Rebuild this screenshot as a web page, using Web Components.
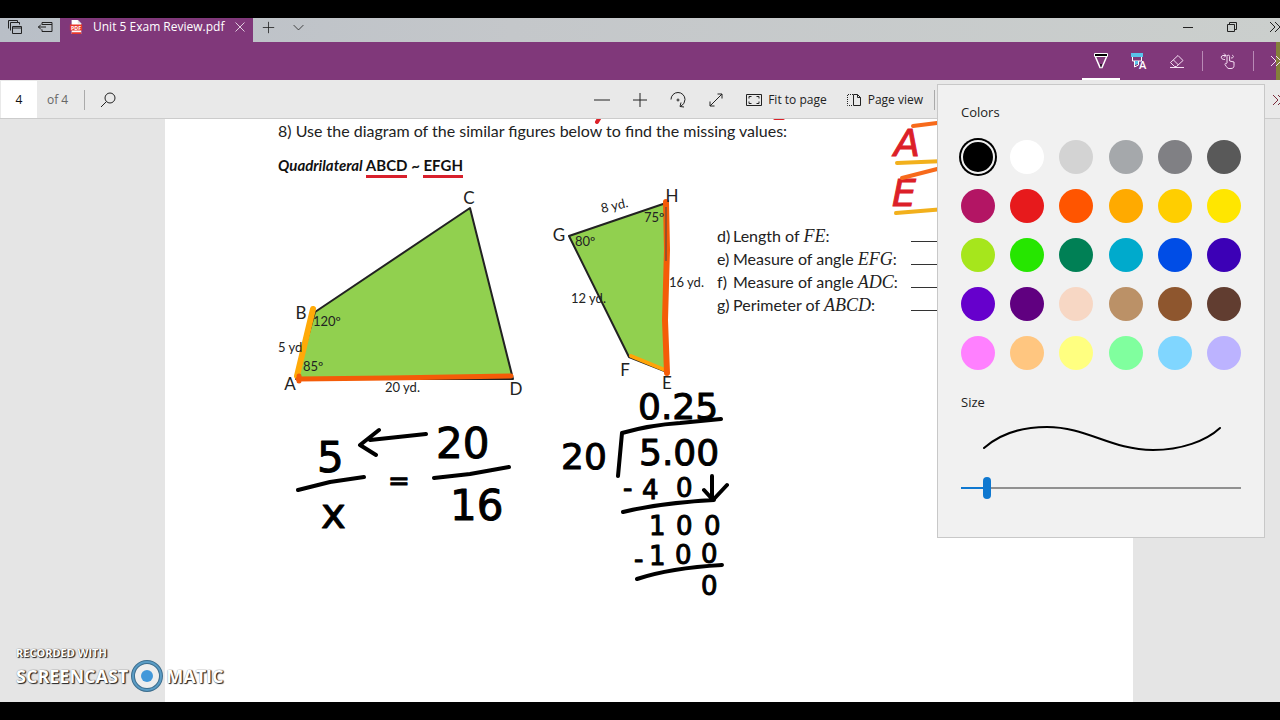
<!DOCTYPE html>
<html lang="en">
<head>
<meta charset="utf-8">
<title>Unit 5 Exam Review.pdf</title>
<style>
  body {
    margin: 0;
    background: #000;
    font-family: 'Open Sans', 'Noto Sans', sans-serif;
    font-size: 12px;
    color: #222;
  }
</style>
</head>
<body>
<reader-window></reader-window>

<script>
// === Helper ====================================================
// Registers an element whose shadow root is cloned from a template.

function component(name, html, setup) {
  const template = document.createElement('template');
  template.innerHTML = html;

  customElements.define(name, class extends HTMLElement {
    constructor() {
      super();
      this.attachShadow({ mode: 'open' });
      this.shadowRoot.appendChild(template.content.cloneNode(true));
    }
    connectedCallback() {
      if (setup) setup(this, this.shadowRoot);
    }
  });
}

// === ui-icon ===================================================
// <ui-icon name="plus"></ui-icon>, drawn with currentColor.

const ICONS = {
  tabs: '<path d="M1.500 9.500v-8h9v2M3.500 11.500v-8h9v2M5.500 7.500h9v7h-9zM5.500 9h9"/>',
  aside: '<path d="M5 5.500v-2h10v9H5v-2M5 5.500h10M1 8h8M4 5.500L1.500 8 4 10.500"/>',
  close: '<path d="M2 2l12 12M14 2L2 14"/>',
  plus: '<path d="M8 1v14M1 8h14"/>',
  minus: '<path d="M0 8h16"/>',
  down: '<path d="M2 5l6 6 6-6"/>',
  minimize: '<path d="M3 8.500h10"/>',
  restore: '<path d="M3.500 5.500h7v7h-7zM5.500 5.500v-2h7v7h-2"/>',
  more: '<path d="M3 3l5 5-5 5M8 3l5 5-5 5"/>',
  search: '<circle cx="10" cy="6" r="5"/><path d="M6.500 9.500L1 15"/>',
  rotate: '<path d="M1 7.500A7 7 0 0 1 15 7.500Q15 12 10.500 14.500M14 15l-4-.5 1-4"/><circle cx="8" cy="8" r="1"/>',
  expand: '<path d="M2 14L14 2M9.500 2H14v4.500M2 9.500V14h4.500"/>',
  fit: '<path d="M.5 2.500h15v11H.5zM3 6.500v-2h2.500M10.500 4.500H13v2M13 9.500v2h-2.500M5.500 11.500H3v-2"/>',
  pages: '<path stroke-dasharray="1 1" d="M7 2.500H1.500v11H7"/><path d="M7.500 2.500h4l3 3v8h-7zM11.500 2.500v3h3"/>',
  pen: '<path fill="#000" stroke="#fff" d="M1.500.5h13v3h-13z"/><path stroke="#fff" stroke-width="1.500" d="M2.500 4l4.500 10.500h2L13.500 4"/><path fill="#111" stroke="none" d="M7 11h2l-1 4z"/>',
  marker: '<path fill="#59c3ea" stroke="none" d="M0 0h12v4H0z"/><path stroke="#fff" d="M1.500 4v4h9V4M3.500 8v6l4-2V8"/><path fill="#59c3ea" stroke="none" d="M4 8h3v3l-3 1z"/><text x="8" y="16" fill="#fff" stroke="none" font-size="11" font-weight="600">A</text>',
  eraser: '<path d="M1.500 9.500l7.500-7 5 5-6.500 6h-2zM4.500 7l5 5M1 14.500h14"/>',
  touch: '<path d="M7 10V3.500a1.300 1.300 0 0 1 2.600 0V8l4.400 1v3.500c0 2-1 3-3 3H9c-1.500 0-2-1-4-4 0-1.500 1-1.500 2-.5M5 6.500C1 7 0 3 3 2.500h3M4 .5l2 2-2 2M11 5c3 0 3-2 1-3"/>',
  pdf: '<path fill="#fff" stroke="none" d="M3 0h7l4 4v12H3z"/><path fill="#ddd" stroke="none" d="M10 0v4h4z"/><path fill="#e8372c" stroke="none" d="M1 5h14v7H1zM3 14h11v2H3z"/><text x="8" y="11" text-anchor="middle" fill="#fff" stroke="none" font-size="6" font-weight="700">PDF</text>'
};

component('ui-icon', `
<style>
  :host { display: inline-flex; width: 16px; height: 16px; flex: none; }
  svg { width: 100%; height: 100%; overflow: visible; fill: none; stroke: currentColor; }
</style>
<svg viewBox="0 0 16 16" aria-hidden="true"></svg>
`, (host, root) => {
  root.querySelector('svg').innerHTML = ICONS[host.getAttribute('name')];
});

// === tool-button ===============================================
// A flat button. Attributes: label, selected.

component('tool-button', `
<style>
  :host { display: flex; min-width: 38px; flex: none; }
  button {
    display: flex; flex: 1; align-items: center; justify-content: center; gap: 6px;
    padding: 0; border: 0; border-bottom: 2px solid transparent; border-top: 2px solid transparent;
    background: none; color: inherit; font: inherit; white-space: nowrap;
  }
  :host([selected]) button { border-bottom-color: #fff; }
</style>
<button type="button"><slot></slot></button>
`, (host, root) => {
  const label = host.getAttribute('label');
  if (label) root.querySelector('button').setAttribute('aria-label', label);
});

// === tab-strip =================================================

component('tab-strip', `
<style>
  :host {
    display: flex; height: 24px; overflow: hidden; color: #222;
    background: linear-gradient(90deg, #b9bfc7, #c4c7ca 40%, #cbcfcd);
  }
  .start { display: flex; align-items: center; justify-content: space-between; width: 46px; padding: 0 7px; height: 18px; }
  .tab {
    display: flex; align-items: center; gap: 10px; box-sizing: border-box;
    width: 193px; padding: 0 11px 7px 9px; background: #80387a; color: #fff;
  }
  .title { flex: 1; white-space: nowrap; }
  .tab ui-icon { width: 14px; height: 14px; }
  .tab tool-button { min-width: 12px; }
  .tab tool-button ui-icon { width: 12px; height: 12px; }
  .new { display: flex; height: 18px; }
  .new tool-button { min-width: 30px; }
  .new ui-icon { width: 13px; height: 13px; }
  .window { display: flex; height: 18px; margin-left: auto; margin-right: -3px; }
  .window tool-button { min-width: 44px; }
  .window .more { min-width: 28px; }
  .more ui-icon { margin-left: 13px; }
</style>
<div class="start"><ui-icon name="tabs"></ui-icon><ui-icon name="aside"></ui-icon></div>
<div class="tab">
  <ui-icon name="pdf"></ui-icon>
  <span class="title">Unit 5 Exam Review.pdf</span>
  <tool-button label="Close tab"><ui-icon name="close"></ui-icon></tool-button>
</div>
<div class="new">
  <tool-button label="New tab"><ui-icon name="plus"></ui-icon></tool-button>
  <tool-button label="Tab previews"><ui-icon name="down"></ui-icon></tool-button>
</div>
<div class="window">
  <tool-button label="Minimize"><ui-icon name="minimize"></ui-icon></tool-button>
  <tool-button label="Restore"><ui-icon name="restore"></ui-icon></tool-button>
  <tool-button class="more" label="More"><ui-icon name="more"></ui-icon></tool-button>
</div>
`);

// === ink-bar ===================================================
// The purple bar with pen, highlighter, eraser and touch writing.

component('ink-bar', `
<style>
  :host {
    display: flex; justify-content: flex-end; height: 38px; overflow: hidden; color: #f6dff4;
    background: linear-gradient(#84803a, #84803a) right / 4px 100% no-repeat #80387a;
  }
  hr { width: 1px; height: 20px; margin: 9px 6px; border: 0; background: #b98ab6; }
  .more { min-width: 24px; margin-right: -4px; }
  .more ui-icon { margin-left: 8px; }
</style>
<tool-button label="Pen" selected><ui-icon name="pen"></ui-icon></tool-button>
<tool-button label="Highlighter"><ui-icon name="marker"></ui-icon></tool-button>
<tool-button label="Eraser"><ui-icon name="eraser"></ui-icon></tool-button>
<hr>
<tool-button label="Touch writing"><ui-icon name="touch"></ui-icon></tool-button>
<hr>
<tool-button class="more" label="More"><ui-icon name="more"></ui-icon></tool-button>
`);

// === pdf-toolbar ===============================================

component('pdf-toolbar', `
<style>
  :host {
    display: flex; box-sizing: border-box; height: 39px; padding-top: 1px; overflow: hidden;
    background: #e9e9e9; border-bottom: 1px solid #ccc; color: #222;
  }
  label { display: flex; align-items: center; gap: 10px; color: #666; }
  input {
    box-sizing: border-box; width: 36px; height: 37px; margin-left: 1px; padding: 0; border: 0;
    background: #fff; color: #111; font: inherit; text-align: center;
  }
  hr { width: 1px; height: 20px; margin: 9px 0; border: 0; background: #aaa; }
  .left { display: flex; }
  .left hr { margin-left: 16px; margin-right: 4px; }
  .right { display: flex; margin-left: auto; margin-right: -6px; }
  .text { padding: 0 11px; }
  .text + .text { padding-left: 8px; }
  .covered { width: 319px; }
  .more { min-width: 32px; color: #7a2a3a; }
  .more ui-icon { margin-left: 16px; }
</style>
<div class="left">
  <label><input type="text" value="4" aria-label="Page">of 4</label>
  <hr>
  <tool-button label="Search"><ui-icon name="search"></ui-icon></tool-button>
</div>
<div class="right">
  <tool-button label="Zoom out"><ui-icon name="minus"></ui-icon></tool-button>
  <tool-button label="Zoom in"><ui-icon name="plus"></ui-icon></tool-button>
  <tool-button label="Rotate"><ui-icon name="rotate"></ui-icon></tool-button>
  <tool-button label="Full screen"><ui-icon name="expand"></ui-icon></tool-button>
  <tool-button class="text"><ui-icon name="fit"></ui-icon>Fit to page</tool-button>
  <tool-button class="text"><ui-icon name="pages"></ui-icon>Page view</tool-button>
  <hr>
  <div class="covered"></div>
  <tool-button class="more" label="More"><ui-icon name="more"></ui-icon></tool-button>
</div>
`);

// === pen-panel =================================================
// Colour swatches and the stroke size slider.

const COLORS = [
  ['Black', '#000000'], ['White', '#ffffff'], ['Light gray', '#d3d3d3'], ['Gray', '#a5a8ab'], ['Mid gray', '#808084'], ['Dark gray', '#595959'],
  ['Plum', '#b31564'], ['Red', '#e71a1c'], ['Orange', '#ff5500'], ['Amber', '#ffaa00'], ['Gold', '#ffce00'], ['Yellow', '#ffe600'],
  ['Lime', '#a6e61c'], ['Green', '#26e600'], ['Teal', '#008055'], ['Cyan', '#00aacc'], ['Blue', '#004de6'], ['Indigo', '#3c00b6'],
  ['Violet', '#6600cc'], ['Purple', '#600080'], ['Beige', '#f7d7c4'], ['Tan', '#bb9167'], ['Brown', '#8e562e'], ['Dark brown', '#613d30'],
  ['Pink', '#ff80ff'], ['Peach', '#ffc680'], ['Pale yellow', '#ffff80'], ['Mint', '#80ff9e'], ['Sky', '#80d6ff'], ['Lavender', '#bcb3ff']
];

component('pen-panel', `
<style>
  :host {
    display: block; box-sizing: border-box; width: 328px; padding: 18px 23px 32px;
    background: #f1f1f1; border: 1px solid #c8c8c8; color: #222;
  }
  h2, label { display: block; margin: 0; font-size: 13px; font-weight: 400; line-height: 18px; }
  .swatches {
    display: grid; grid-template-columns: repeat(6, 34px);
    justify-content: space-between; row-gap: 15px; margin: 19px 0 23px;
  }
  .swatches input {
    appearance: none; width: 34px; height: 34px; margin: 0;
    border-radius: 50%; background: var(--swatch);
  }
  .swatches input:checked { border: 2px solid #f1f1f1; box-shadow: 0 0 0 2px #000; }
  svg { display: block; width: 100%; height: 60px; }
  .size {
    appearance: none; display: block; width: 100%; height: 34px; margin: 0;
    background: linear-gradient(90deg, #0f78d0 10%, #919191 10%) center / 100% 2px no-repeat;
  }
  .size::-webkit-slider-thumb { appearance: none; width: 8px; height: 22px; border-radius: 4px; background: #0f78d0; }
</style>
<h2>Colors</h2>
<div class="swatches" role="radiogroup" aria-label="Colors"></div>
<label for="size">Size</label>
<svg viewBox="0 0 280 60" fill="none" stroke="#000" stroke-width="2" stroke-linecap="round" aria-hidden="true">
  <path d="M23 37C42 20 66 16 86 16C126 16 150 39 192 39C220 39 245 30 259 17"/>
</svg>
<input class="size" id="size" type="range" min="0" max="100" value="8">
`, (host, root) => {
  root.querySelector('.swatches').innerHTML = COLORS.map(([name, value], i) =>
    `<input type="radio" name="color" aria-label="${name}" style="--swatch: ${value}"${i ? '' : ' checked'}>`
  ).join('');
});

// === answer-line ===============================================
// One lettered question followed by a blank to write on.

component('answer-line', `
<style>
  :host { display: grid; grid-template-columns: 16px 178px 150px; line-height: 23px; height: 23px; white-space: nowrap; }
  .blank { height: 17px; border-bottom: 1px solid #333; }
</style>
<span class="letter"></span><span><slot></slot></span><span class="blank"></span>
`, (host, root) => {
  root.querySelector('.letter').textContent = host.getAttribute('letter') + ')';
});

// === similar-figures ===========================================
// Two columns: each quadrilateral with the handwritten work below.

component('similar-figures', `
<style>
  :host { display: flex; }
  .column { display: flex; flex-direction: column; flex: none; }
  .first { width: 260px; }
  .second { width: 179px; }
  svg { display: block; overflow: visible; }
  .figure { font-family: Lato, 'Open Sans', sans-serif; font-size: 13px; fill: #222; }
  .vertex { font-size: 17px; }
  .ink { font-family: 'DejaVu Sans', sans-serif; fill: #000; stroke: #000; stroke-linejoin: round; }
  .big { font-size: 42px; }
  .mid { font-size: 36px; }
  .small { font-size: 26px; }
  .stroke { fill: none; stroke-width: 4; stroke-linecap: round; }
  .edge { fill: #91d04f; stroke: #222; stroke-width: 2; stroke-linejoin: round; }
  .mark { fill: none; stroke-linecap: round; stroke-linejoin: round; }
</style>
<div class="column first">
  <svg class="figure" width="260" height="214" viewBox="278 186 260 214">
    <path class="edge" d="M296 379L315 312L470 208L513 379z"/>
    <path class="mark" stroke="#ffaa08" stroke-width="6" d="M297 376L313 309"/>
    <path class="mark" stroke="#f45c08" stroke-width="5" d="M299 376v5M298 379L390 378L511 376"/>
    <g class="vertex" text-anchor="middle">
      <text x="301" y="319">B</text><text x="469" y="204">C</text>
      <text x="290" y="390">A</text><text x="516" y="395">D</text>
    </g>
    <text x="313" y="326">120º</text><text x="303" y="371">85º</text>
    <text x="278" y="352">5 yd</text><text x="385" y="392">20 yd.</text>
  </svg>
  <svg class="ink" width="260" height="200" viewBox="278 400 260 200">
    <path class="stroke" d="M298 490L330 482L364 477M434 478L470 474L509 467M426 434L370 440M379 430L360 445L376 455"/>
    <text class="big" x="317" y="472">5</text>
    <text class="big" x="321" y="528">x</text>
    <text class="small" x="388" y="490">=</text>
    <text class="big" x="436" y="458">20</text>
    <text class="big" x="450" y="520">16</text>
  </svg>
</div>
<div class="column second">
  <svg class="figure" width="179" height="206" viewBox="538 186 179 206">
    <path class="edge" d="M569 236L666 203L667 372L629 357z"/>
    <path class="mark" stroke="#ffa408" stroke-width="4" d="M631 356L665 370"/>
    <path class="mark" stroke="#f45c08" stroke-width="6" d="M666 202L667 250L665 320L667 373"/>
    <path stroke="#444" d="M666 207v54"/>
    <g class="vertex" text-anchor="middle">
      <text x="559" y="241">G</text><text x="672" y="202">H</text>
      <text x="625" y="376">F</text><text x="667" y="389">E</text>
    </g>
    <text x="602" y="213" transform="rotate(-13 602 213)">8 yd.</text>
    <text x="644" y="222">75º</text><text x="575" y="246">80º</text>
    <text x="571" y="303">12 yd.</text><text x="669" y="287">16 yd.</text>
  </svg>
  <svg class="ink" width="179" height="208" viewBox="538 392 179 208">
    <path class="stroke" d="M618 476L622 433Q650 425 680 423L721 419M623 512Q660 503 714 500M712 476V498M704 490L713 500L727 485M637 579Q670 568 722 565"/>
    <text class="mid" x="638" y="419">0.25</text>
    <text class="mid" x="561" y="469">20</text>
    <text class="mid" x="639" y="465">5.00</text>
    <text class="small" x="623" y="497">-</text><text class="small" x="642" y="499">4</text><text class="small" x="676" y="497">0</text>
    <g class="small">
      <text x="649" y="535">1</text><text x="676" y="535">0</text><text x="704" y="535">0</text>
      <text x="634" y="568">-</text><text x="649" y="565">1</text><text x="675" y="564">0</text><text x="701" y="563">0</text>
      <text x="701" y="595">0</text>
    </g>
  </svg>
</div>
<slot></slot>
`);

// === exam-page =================================================
// The white sheet. Pen strokes lie over the printed text.

component('exam-page', `
<style>
  :host {
    display: block; position: relative; box-sizing: border-box; flex: 1; padding-left: 113px;
    background: #fff; color: #222; overflow: hidden;
    font-family: Lato, 'Open Sans', sans-serif; font-size: 16px;
  }
  p { margin: 0; line-height: 24px; white-space: nowrap; }
  .name { margin: 10px 0 9px; font-weight: 700; font-size: 15px; color: #111; }
  .name u { text-decoration: none; box-shadow: 0 1px #fff, 0 4px #d8202c; }
  .answers { margin-top: 38px; }
  i { font-family: 'Liberation Serif', serif; font-size: 18px; line-height: 1; }
  .pen { position: absolute; top: 0; left: 0; fill: none; stroke-linecap: round; stroke-width: 4; }
  .pen text {
    font-family: 'DejaVu Sans', sans-serif; font-style: italic; font-size: 38px;
    fill: #dc2028; stroke: #dc2028; stroke-width: 1;
  }
</style>
<p>8) Use the diagram of the similar figures below to find the missing values:</p>
<p class="name"><em>Quadrilateral</em> <u>ABCD</u> ~ <u>EFGH</u></p>
<similar-figures>
  <div class="answers">
    <answer-line letter="d">Length of <i>FE</i>:</answer-line>
    <answer-line letter="e">Measure of angle <i>EFG</i>:</answer-line>
    <answer-line letter="f">Measure of angle <i>ADC</i>:</answer-line>
    <answer-line letter="g">Perimeter of <i>ABCD</i>:</answer-line>
  </div>
</similar-figures>
<svg class="pen" width="800" height="110" viewBox="165 119 800 110">
  <path stroke="#dc2028" d="M600 117L597 122M775 118h8"/>
  <text x="894" y="156">A</text>
  <text x="892" y="206">E</text>
  <path stroke="#f76a1b" d="M913 126L945 122M902 178L945 167"/>
  <path stroke="#f2b01c" d="M897 163L945 161M896 213L945 209"/>
</svg>
`);

// === recorder-mark =============================================

component('recorder-mark', `
<style>
  :host {
    display: block; color: #fff; font-family: 'Open Sans', sans-serif; font-weight: 700;
    text-shadow: 1px 1px 1px #222, 1px 0 1px #444, 0 0 1px #888;
  }
  small { display: block; font-size: 11px; line-height: 12px; }
  div { display: flex; align-items: center; gap: 3px; font-size: 18px; line-height: 34px; }
  svg { width: 32px; height: 32px; }
</style>
<small>RECORDED WITH</small>
<div>
  <span>SCREENCAST</span>
  <svg viewBox="0 0 32 32" aria-hidden="true">
    <circle cx="16" cy="16" r="14" fill="#eee" stroke="#3d6e8e" stroke-width="4"/>
    <circle cx="16" cy="16" r="14" fill="none" stroke="#5a9cc5" stroke-width="2"/>
    <circle cx="16" cy="16" r="6" fill="#4298da"/>
  </svg>
  <span>MATIC</span>
</div>
`);

// === reader-window =============================================

component('reader-window', `
<style>
  :host { display: flex; flex-direction: column; box-sizing: border-box; height: 100vh; padding: 18px 0; }
  main { position: relative; display: flex; flex: 1; min-height: 0; padding: 0 147px 0 165px; background: #e5e5e5; }
  recorder-mark { position: absolute; left: 16px; bottom: 9px; }
  .tools { position: relative; z-index: 1; }
  pen-panel { position: absolute; right: 15px; top: 4px; }
</style>
<tab-strip></tab-strip>
<ink-bar></ink-bar>
<div class="tools">
  <pdf-toolbar></pdf-toolbar>
  <pen-panel></pen-panel>
</div>
<main>
  <exam-page></exam-page>
  <recorder-mark></recorder-mark>
</main>
`);
</script>
</body>
</html>
